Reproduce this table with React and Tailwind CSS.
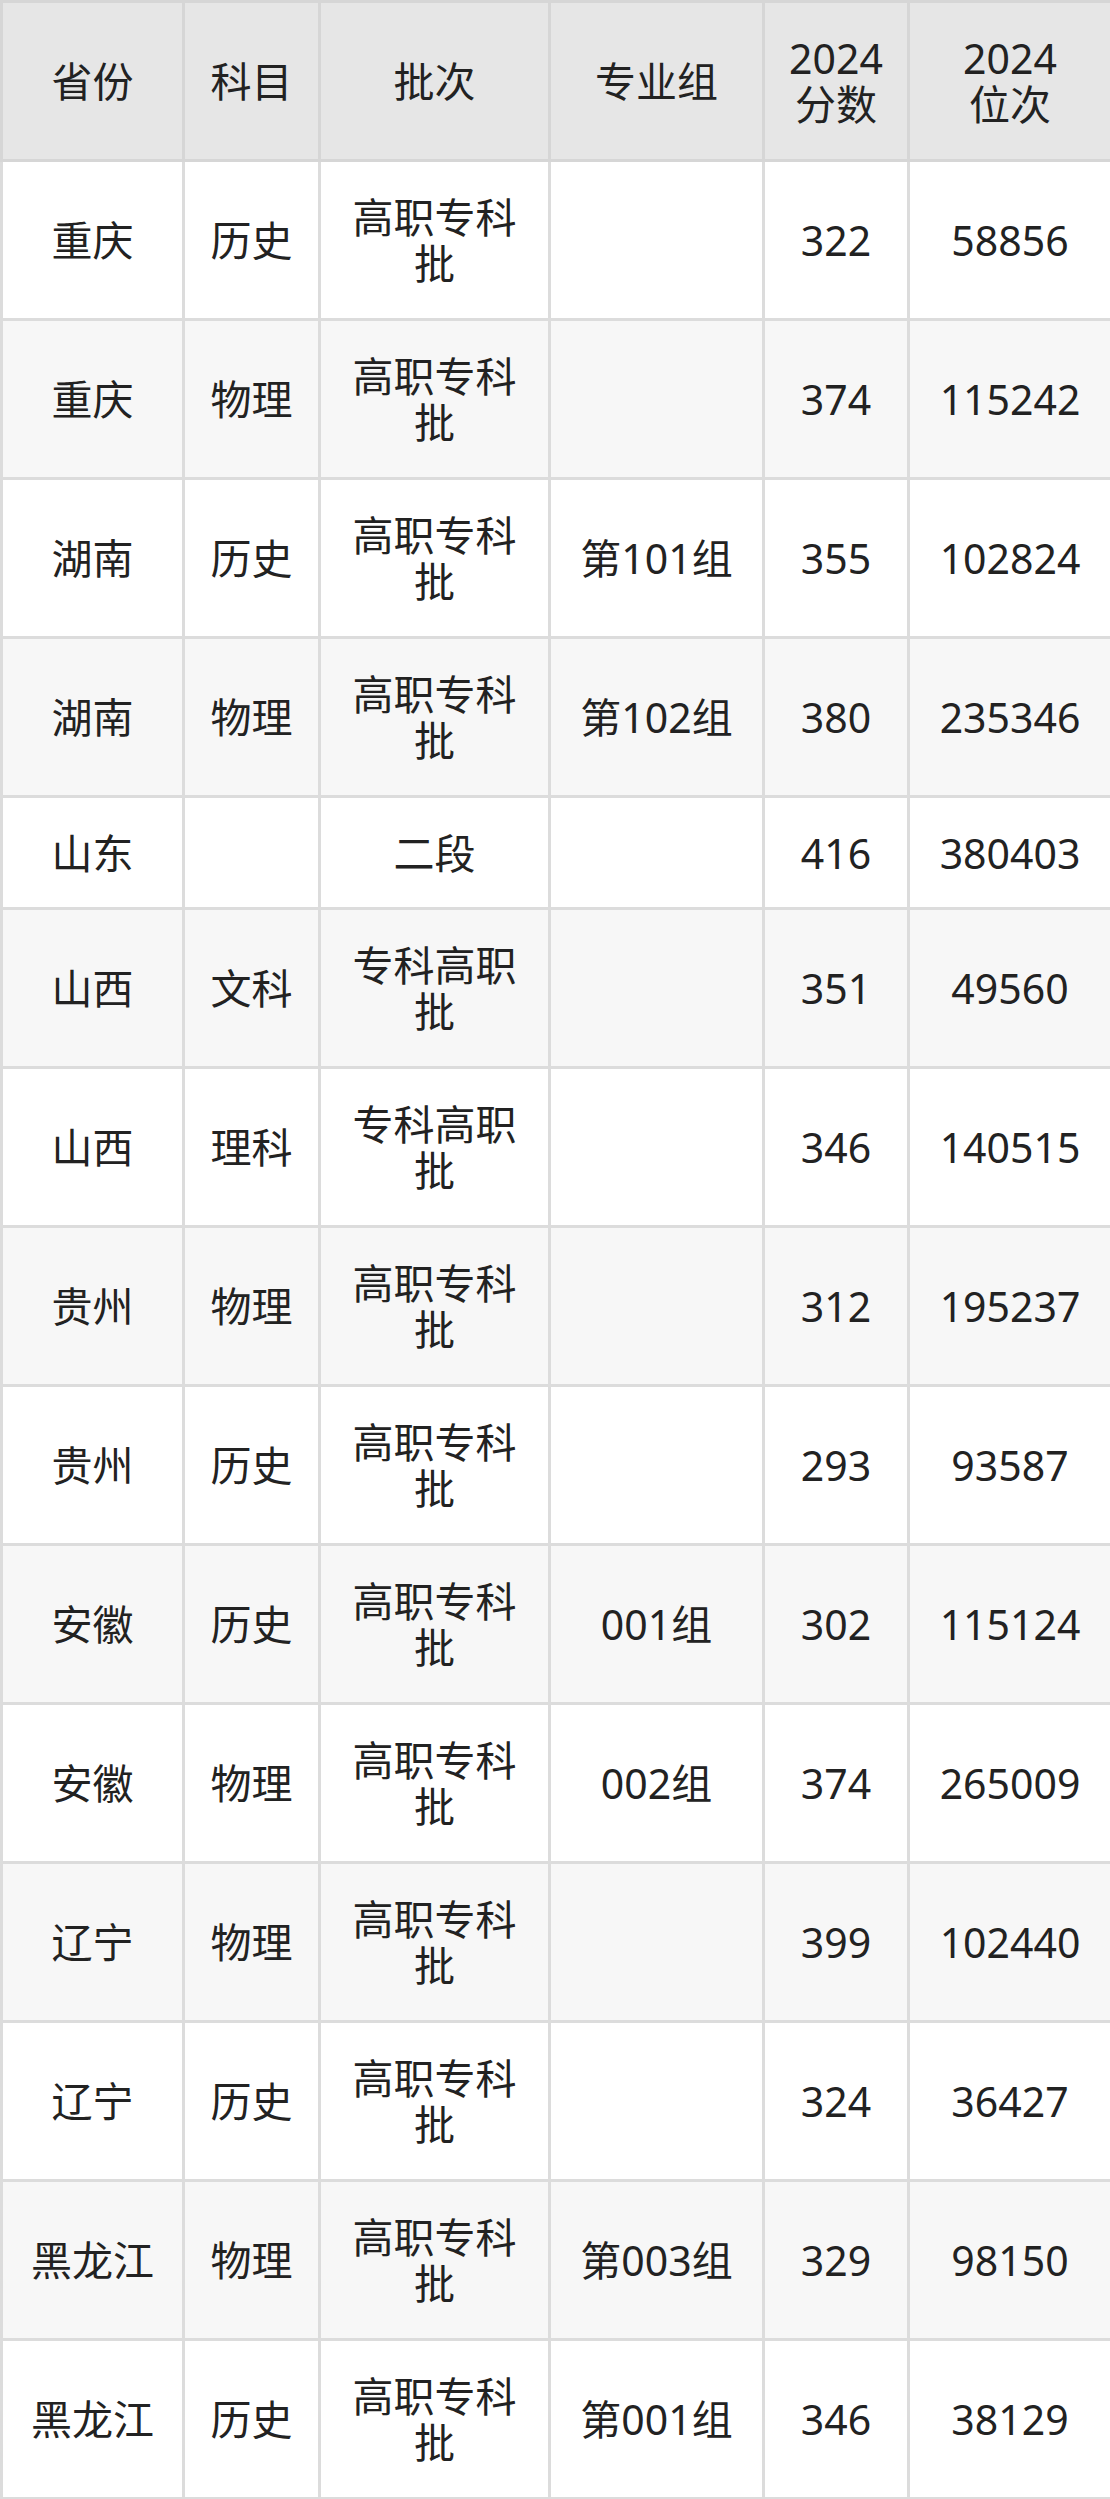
const rows = [
  ['重庆', '历史', '高职专科批', '', '322', '58856'],
  ['重庆', '物理', '高职专科批', '', '374', '115242'],
  ['湖南', '历史', '高职专科批', '第101组', '355', '102824'],
  ['湖南', '物理', '高职专科批', '第102组', '380', '235346'],
  ['山东', '', '二段', '', '416', '380403'],
  ['山西', '文科', '专科高职批', '', '351', '49560'],
  ['山西', '理科', '专科高职批', '', '346', '140515'],
  ['贵州', '物理', '高职专科批', '', '312', '195237'],
  ['贵州', '历史', '高职专科批', '', '293', '93587'],
  ['安徽', '历史', '高职专科批', '001组', '302', '115124'],
  ['安徽', '物理', '高职专科批', '002组', '374', '265009'],
  ['辽宁', '物理', '高职专科批', '', '399', '102440'],
  ['辽宁', '历史', '高职专科批', '', '324', '36427'],
  ['黑龙江', '物理', '高职专科批', '第003组', '329', '98150'],
  ['黑龙江', '历史', '高职专科批', '第001组', '346', '38129'],
];

const widths = ['w-[182px]', 'w-[136px]', 'w-[230px]', 'w-[214px]', 'w-[145px]', 'w-[203px]'];

export default function App() {
  return (
    <div
      className="w-[1110px] bg-white text-[#222222] text-[41px] leading-[46px]"
      style={{ fontFamily: '"Noto Sans", "Noto Sans CJK SC", sans-serif' }}
    >
      <table className="w-[1110px] table-fixed border-collapse border-[3px] border-[#d6d6d6]">
        <colgroup>
          {widths.map((w, i) => (
            <col key={i} className={w} />
          ))}
        </colgroup>
        <thead>
          <tr className="h-[159px] bg-[#e6e6e6]">
            <th className="border-[3px] border-[#d6d6d6] px-4 font-normal">省份</th>
            <th className="border-[3px] border-[#d6d6d6] px-4 font-normal">科目</th>
            <th className="border-[3px] border-[#d6d6d6] px-4 font-normal">批次</th>
            <th className="border-[3px] border-[#d6d6d6] px-4 font-normal">专业组</th>
            <th className="border-[3px] border-[#d6d6d6] px-2 font-normal">
              <div>2024</div>
              <div>分数</div>
            </th>
            <th className="border-[3px] border-[#d6d6d6] px-2 font-normal">
              <div>2024</div>
              <div>位次</div>
            </th>
          </tr>
        </thead>
        <tbody>
          {rows.map((r, i) => (
            <tr
              key={i}
              className={`${r[0] === '山东' ? 'h-[112px]' : 'h-[159px]'} ${i % 2 === 1 ? 'bg-[#f7f7f7]' : 'bg-white'}`}
            >
              {r.map((c, j) => (
                <td
                  key={j}
                  className={`border-[3px] border-[#dcdcdc] text-center align-middle ${j >= 4 ? 'px-2' : 'px-4'}`}
                >
                  {c}
                </td>
              ))}
            </tr>
          ))}
        </tbody>
      </table>
    </div>
  );
}
